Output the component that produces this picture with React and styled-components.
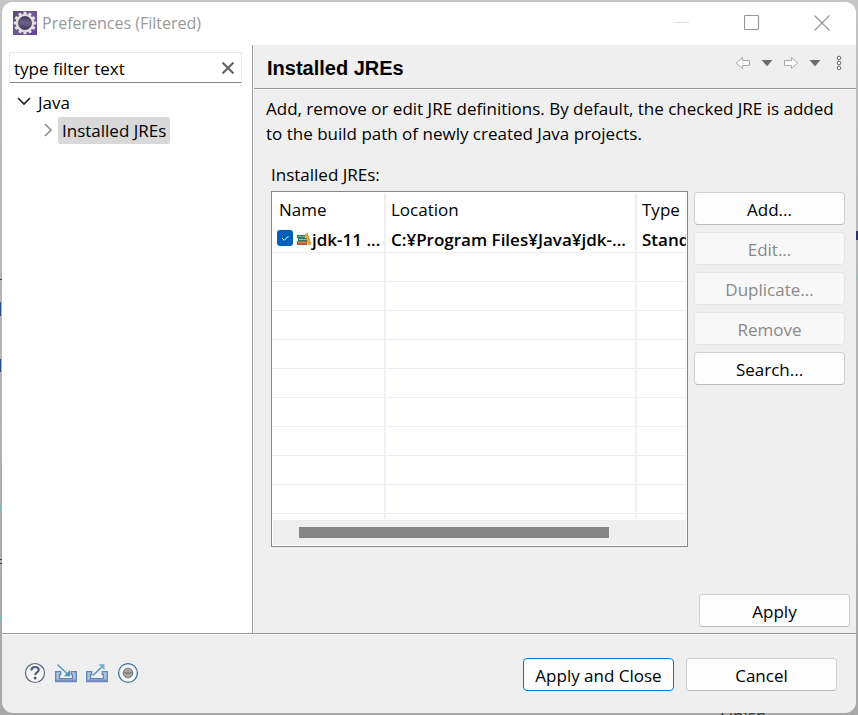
import React from "react";
import styled, { createGlobalStyle, css } from "styled-components";

const GlobalStyle = createGlobalStyle`
  * { box-sizing: border-box; }
  body {
    margin: 0;
    color: #000;
    font: 17px/25px "Open Sans", "Noto Sans", sans-serif;
  }
  button, input { font: inherit; color: inherit; }
`;

const Desktop = styled.div`
  position: relative;
  display: flex;
  min-height: 100vh;
  padding: 2px;
  overflow: hidden;
  background:
    linear-gradient(#24508c, #24508c) 0 302px / 1px 14px no-repeat,
    linear-gradient(#24508c, #24508c) 0 359px / 1px 13px no-repeat,
    linear-gradient(#444, #444) 0 279px / 2px 1px no-repeat,
    linear-gradient(#444, #444) 0 559px / 2px 1px no-repeat,
    linear-gradient(#444, #444) 0 563px / 2px 1px no-repeat,
    linear-gradient(#7fb5bd, #7fb5bd) 0 505px / 1px 6px no-repeat,
    linear-gradient(#7fb5bd, #7fb5bd) 0 616px / 1px 6px no-repeat,
    linear-gradient(#2b3560, #2b3560) 100% 231px / 2px 9px no-repeat,
    linear-gradient(#8cc4c4, #8cc4c4) 100% 273px / 1px 7px no-repeat,
    linear-gradient(#c6c6c6, #bdbdbd 10%, #a8a8a8);
`;

const BehindLabel = styled.span`
  position: absolute;
  top: 703px;
  left: 720px;
  color: #333;
`;

const Dialog = styled.main`
  position: relative;
  display: flex;
  flex: 1;
  min-width: 0;
  flex-direction: column;
  overflow: hidden;
  border-radius: 11px;
  background: #efefef;
`;

const TitleBar = styled.header`
  display: flex;
  align-items: center;
  height: 43px;
  padding: 0 11px 2px 11px;
  gap: 5px;
  background: #fff;
  color: #999;
`;

const Title = styled.span`
  flex: 1;
  padding-top: 2px;
  font-size: 16px;
`;

const IconButton = styled.button`
  display: flex;
  align-items: center;
  justify-content: center;
  width: ${(p) => p.$width}px;
  height: 24px;
  padding: 0;
  border: 0;
  background: none;
`;

const WindowControls = styled.div`
  display: flex;
  gap: 24px;
`;

const Body = styled.div`
  display: flex;
  flex: 1;
`;

const Sidebar = styled.nav`
  width: 251px;
  flex: none;
  padding: 7px 10px 0 7px;
  border-right: 1px solid #999;
  background: #fff;
`;

const FilterBox = styled.div`
  display: flex;
  align-items: center;
  height: 31px;
  padding: 1px 3px 0 4px;
  border: 1px solid #e8e8e8;
  border-bottom-color: #868686;
`;

const FilterInput = styled.input`
  flex: 1;
  min-width: 0;
  padding: 0;
  border: 0;
  outline: 0;
  background: none;
  &::placeholder { color: #000; opacity: 1; }
`;

const TreeItem = styled.div`
  display: flex;
  align-items: center;
  height: 28px;
  gap: 3px;
  padding-left: ${(p) => 8 + p.$level * 24}px;
`;

const Tree = styled.div`
  padding-top: 5px;
`;

const TreeLabel = styled.span`
  height: 27px;
  padding: 1px 4px 0;
  border-radius: 2px;
  background: ${(p) => (p.$selected ? "#d9d9d9" : "none")};
`;

const Page = styled.section`
  display: flex;
  flex: 1;
  min-width: 0;
  flex-direction: column;
  border-left: 1px solid #fff;
`;

const PageHeader = styled.div`
  display: flex;
  align-items: center;
  height: 45px;
  padding: 0 5px 0 13px;
  border-bottom: 1px solid #fff;
  box-shadow: inset 0 -1px #999;
`;

const PageTitle = styled.h1`
  flex: 1;
  margin: 0;
  padding-top: 2px;
  font: bold 20px/24px "Liberation Sans", Arial, sans-serif;
`;

const HeaderTools = styled.div`
  display: flex;
  align-items: center;
  padding-bottom: 8px;
`;

const PageContent = styled.div`
  padding: 6px 11px 0 12px;
`;

const Description = styled.p`
  margin: 0;
`;

const SectionLabel = styled.h2`
  margin: 16px 0 0 5px;
  font-size: 17px;
  font-weight: normal;
`;

const JreArea = styled.div`
  display: flex;
  align-items: flex-start;
  gap: 6px;
  padding: 4px 0 0 5px;
`;

const TableFrame = styled.div`
  flex: 1;
  min-width: 0;
  padding: 1px;
  border: 1px solid #828790;
  background: #fff;
`;

const JreTable = styled.table`
  width: 100%;
  table-layout: fixed;
  border-collapse: separate;
  border-spacing: 0;
`;

const Col = styled.col`
  width: ${(p) => (p.$width ? `${p.$width}px` : "auto")};
`;

const HeadCell = styled.th`
  height: 31px;
  padding: 2px 0 0 5px;
  font-weight: normal;
  line-height: 25px;
  text-align: left;
  border-right: 2px solid #eee;
  &:first-child { padding-left: 6px; }
  &:last-child { border-right: 0; }
`;

const Cell = styled.td`
  height: ${(p) => (p.$partial ? 5 : 29)}px;
  padding: ${(p) => (p.$partial ? 0 : 2)}px 0 0 5px;
  overflow: hidden;
  font-weight: 600;
  line-height: 25px;
  white-space: nowrap;
  text-overflow: clip;
  border-right: 2px solid #edf2fa;
  border-bottom: ${(p) => (p.$partial ? 0 : 1)}px solid #eee;
  &:first-child { padding-left: 4px; }
  &:last-child { border-right: 0; }
`;

const CheckLabel = styled.label`
  display: flex;
  align-items: center;
`;

const CheckBox = styled.input`
  appearance: none;
  width: 16px;
  height: 16px;
  margin: 0;
  border-radius: 3px;
  background: #005fb8;
`;

const CheckHolder = styled.span`
  display: grid;
  margin: 0 3px 3px 0;
  & > * { grid-area: 1 / 1; }
  & > svg { pointer-events: none; }
`;

const ScrollTrack = styled.div`
  height: 25px;
  margin-top: 1px;
  padding: 7px 77px 7px 26px;
  background: #efefef;
`;

const ScrollThumb = styled.div`
  height: 11px;
  background: #858585;
`;

const ButtonColumn = styled.div`
  display: flex;
  flex-direction: column;
  gap: 7px;
  padding-top: 1px;
`;

const PushButton = styled.button`
  width: 151px;
  height: 33px;
  padding: 1px 0 0;
  border: 1px solid #d0d0d0;
  border-bottom-color: #bababa;
  border-radius: 4px;
  background: #fdfdfd;
  line-height: 25px;
  ${(p) => p.$primary && css`border-color: #0078d4;`}
  &:disabled {
    border-color: #e5e5e5;
    background: #f8f8f8;
    color: #898989;
  }
`;

const ApplyRow = styled.div`
  display: flex;
  justify-content: flex-end;
  margin-top: auto;
  padding: 0 6px 6px 0;
`;

const Footer = styled.footer`
  display: flex;
  align-items: center;
  height: 80px;
  padding: 2px 19px 0 21px;
  border-top: 1px solid #999;
  box-shadow: inset 0 1px #fff;
`;

const FooterTools = styled.div`
  display: flex;
  flex: 1;
  gap: 7px;
  padding-bottom: 3px;
`;

const FooterActions = styled.div`
  display: flex;
  gap: 12px;
`;

const gearTeeth = Array.from({ length: 12 }, (_, i) => i * 30);

function GearLogo() {
  return (
    <svg width="24" height="24" viewBox="0 0 24 24">
      <defs>
        <linearGradient id="tile" x1="0" y1="0" x2="1" y2="1">
          <stop offset="0" stopColor="#5b4a78" />
          <stop offset="0.5" stopColor="#6e5792" />
          <stop offset="1" stopColor="#644591" />
        </linearGradient>
        <linearGradient id="core" x1="0" y1="0" x2="0" y2="1">
          <stop offset="0" stopColor="#3a3158" />
          <stop offset="0.5" stopColor="#71648c" />
          <stop offset="1" stopColor="#302747" />
        </linearGradient>
      </defs>
      <rect width="24" height="24" fill="url(#tile)" />
      {gearTeeth.map((a) => (
        <rect key={a} x="10.5" y="0.8" width="3" height="4" fill="#e6e4e8" transform={`rotate(${a} 12 12)`} />
      ))}
      <circle cx="12" cy="12" r="8" fill="url(#core)" stroke="#dedcdf" strokeWidth="2.6" />
      <circle cx="12" cy="12" r="6.4" fill="none" stroke="#45404f" strokeWidth=".8" />
    </svg>
  );
}

function Chevron({ open }) {
  return (
    <svg width="14" height="14" viewBox="0 0 14 14" fill="none" strokeWidth="1.6">
      {open ? <path d="M1 3l6 6 6-6" stroke="#222" /> : <path d="M4 1l6 6-6 6" stroke="#8c8c8c" />}
    </svg>
  );
}

function HistoryArrow({ forward }) {
  return (
    <svg width="16" height="14" viewBox="0 0 16 14" fill="#fafafa" stroke="#aaa" strokeLinejoin="round">
      <path d={forward ? "M1.5 4.5h7V1.5L14.8 7l-6.3 5.5V9.5h-7z" : "M14.5 4.5h-7V1.5L1.2 7l6.3 5.5V9.5h7z"} />
    </svg>
  );
}

function DownTriangle() {
  return (
    <svg width="12" height="7" viewBox="0 0 12 7">
      <path d="M.5 0h11L6 6.3z" fill="#6c6c70" />
    </svg>
  );
}

function MenuDots() {
  return (
    <svg width="6" height="16" viewBox="0 0 6 16" fill="#fff" stroke="#666">
      <circle cx="3" cy="3" r="1.8" />
      <circle cx="3" cy="8" r="1.8" />
      <circle cx="3" cy="13" r="1.8" />
    </svg>
  );
}

function Books() {
  return (
    <svg width="16" height="15" viewBox="0 0 16 15">
      <path d="M1 3h8v3H1z" fill="#37785b" />
      <path d="M2 4h7v1H2z" fill="#72b08c" />
      <path d="M2 6h9v3H2z" fill="#287b7c" />
      <path d="M3 7h8v1H3z" fill="#8bc5bc" />
      <path d="M1 9h10v4H1z" fill="#a85b31" />
      <path d="M2 10h8v1H2z" fill="#d89569" />
      <path d="M9 2.5l2.4-1L15 12l-2.5 1z" fill="#e8aa35" stroke="#b97916" strokeWidth=".6" />
    </svg>
  );
}

function HelpIcon() {
  return (
    <svg width="22" height="22" viewBox="0 0 22 22" fill="none">
      <circle cx="11" cy="11" r="9.5" fill="#f7f7f7" stroke="#5c6585" strokeWidth="1.2" />
      <path d="M7.3 8.5c.1-4.6 7.4-4.5 7.4-.6 0 2.5-3.5 2.3-3.5 5" stroke="#505b7c" strokeWidth="2.2" />
      <circle cx="11.1" cy="16" r="1.5" fill="#505b7c" />
    </svg>
  );
}

function TrayIcon({ out }) {
  return (
    <svg width="24" height="22" viewBox="0 0 24 22" fill="none">
      <path d="M1.7 9.7h5v3H5.5v4h13v-4h-1.2v-3h5v10H1.7z" fill="#adc3e3" stroke="#6482b6" strokeWidth="1.3" />
      <path d="M2.4 18.6h19.2" stroke="#738fc0" strokeWidth="2" />
      {out ? (
        <g>
          <path d="M8 13.5L18.5 3.2" stroke="#5298bd" strokeWidth="1.5" />
          <path d="M13.5 2.2h6v6z" fill="#74adc9" />
        </g>
      ) : (
        <g>
          <path d="M3.5 2.5L14.5 13" stroke="#5298bd" strokeWidth="1.5" />
          <path d="M16 8v6.3H9.8z" fill="#4c94b8" />
        </g>
      )}
    </svg>
  );
}

function RecordIcon() {
  return (
    <svg width="22" height="22" viewBox="0 0 22 22">
      <circle cx="11" cy="11" r="9.4" fill="#f8f8f8" stroke="#3473aa" strokeWidth="1.3" />
      <circle cx="11" cy="11" r="4.8" fill="#a5a5a5" stroke="#737373" />
      <path d="M7 11h8" stroke="#858585" strokeWidth="1.5" />
    </svg>
  );
}

const jreActions = [
  { label: "Add..." },
  { label: "Edit...", disabled: true },
  { label: "Duplicate...", disabled: true },
  { label: "Remove", disabled: true },
  { label: "Search..." },
];

const emptyRows = Array.from({ length: 10 }, (_, i) => i);

export default function App() {
  return (
    <Desktop>
      <GlobalStyle />
      <BehindLabel aria-hidden="true">Finish</BehindLabel>
      <Dialog>
        <TitleBar>
          <GearLogo />
          <Title>Preferences (Filtered)</Title>
          <WindowControls>
            <IconButton $width={46} aria-label="Minimize">
              <svg width="16" height="16"><path d="M0 7.5h15" stroke="#e2e2e2" /></svg>
            </IconButton>
            <IconButton $width={46} aria-label="Maximize">
              <svg width="16" height="16"><rect x="0.5" y="0.5" width="14" height="14" rx="1" fill="none" stroke="#999" strokeWidth="1.2" /></svg>
            </IconButton>
            <IconButton $width={46} aria-label="Close">
              <svg width="16" height="16"><path d="M.5 .5l15 15M15.5 .5l-15 15" stroke="#999" strokeWidth="1.3" /></svg>
            </IconButton>
          </WindowControls>
        </TitleBar>

        <Body>
          <Sidebar>
            <FilterBox>
              <FilterInput aria-label="Filter" placeholder="type filter text" />
              <IconButton $width={20} aria-label="Clear filter">
                <svg width="14" height="14"><path d="M1.5 1.5l11 11M12.5 1.5l-11 11" stroke="#666" strokeWidth="2.2" /></svg>
              </IconButton>
            </FilterBox>
            <Tree role="tree">
              <TreeItem role="treeitem" aria-expanded="true" $level={0}>
                <Chevron open />
                <TreeLabel>Java</TreeLabel>
              </TreeItem>
              <TreeItem role="treeitem" aria-selected="true" $level={1}>
                <Chevron />
                <TreeLabel $selected>Installed JREs</TreeLabel>
              </TreeItem>
            </Tree>
          </Sidebar>

          <Page>
            <PageHeader>
              <PageTitle>Installed JREs</PageTitle>
              <HeaderTools>
                <IconButton $width={24} aria-label="Back"><HistoryArrow /></IconButton>
                <IconButton $width={24} aria-label="Back history"><DownTriangle /></IconButton>
                <IconButton $width={24} aria-label="Forward"><HistoryArrow forward /></IconButton>
                <IconButton $width={24} aria-label="Forward history"><DownTriangle /></IconButton>
                <IconButton $width={24} aria-label="Menu"><MenuDots /></IconButton>
              </HeaderTools>
            </PageHeader>

            <PageContent>
              <Description>
                Add, remove or edit JRE definitions. By default, the checked JRE is added to the build
                path of newly created Java projects.
              </Description>
              <SectionLabel>Installed JREs:</SectionLabel>
              <JreArea>
                <TableFrame>
                  <JreTable>
                    <colgroup>
                      <Col $width={113} />
                      <Col $width={251} />
                      <Col />
                    </colgroup>
                    <thead>
                      <tr>
                        <HeadCell>Name</HeadCell>
                        <HeadCell>Location</HeadCell>
                        <HeadCell>Type</HeadCell>
                      </tr>
                    </thead>
                    <tbody>
                      <tr>
                        <Cell>
                          <CheckLabel>
                            <CheckHolder>
                              <CheckBox type="checkbox" defaultChecked />
                              <svg width="16" height="16"><path d="M5 8l2.3 2.3L11.5 6" fill="none" stroke="#fff" /></svg>
                            </CheckHolder>
                            <Books />
                            jdk-11 ...
                          </CheckLabel>
                        </Cell>
                        <Cell>C:¥Program Files¥Java¥jdk-...</Cell>
                        <Cell>Stand</Cell>
                      </tr>
                      {emptyRows.map((i) => (
                        <tr key={i}>
                          <Cell $partial={i === 9} />
                          <Cell $partial={i === 9} />
                          <Cell $partial={i === 9} />
                        </tr>
                      ))}
                    </tbody>
                  </JreTable>
                  <ScrollTrack>
                    <ScrollThumb />
                  </ScrollTrack>
                </TableFrame>
                <ButtonColumn>
                  {jreActions.map((a) => (
                    <PushButton key={a.label} disabled={a.disabled}>{a.label}</PushButton>
                  ))}
                </ButtonColumn>
              </JreArea>
            </PageContent>
            <ApplyRow>
              <PushButton>Apply</PushButton>
            </ApplyRow>
          </Page>
        </Body>

        <Footer>
          <FooterTools>
            <IconButton $width={24} aria-label="Help"><HelpIcon /></IconButton>
            <IconButton $width={24} aria-label="Import"><TrayIcon /></IconButton>
            <IconButton $width={24} aria-label="Export"><TrayIcon out /></IconButton>
            <IconButton $width={24} aria-label="Record"><RecordIcon /></IconButton>
          </FooterTools>
          <FooterActions>
            <PushButton $primary>Apply and Close</PushButton>
            <PushButton>Cancel</PushButton>
          </FooterActions>
        </Footer>
      </Dialog>
    </Desktop>
  );
}
